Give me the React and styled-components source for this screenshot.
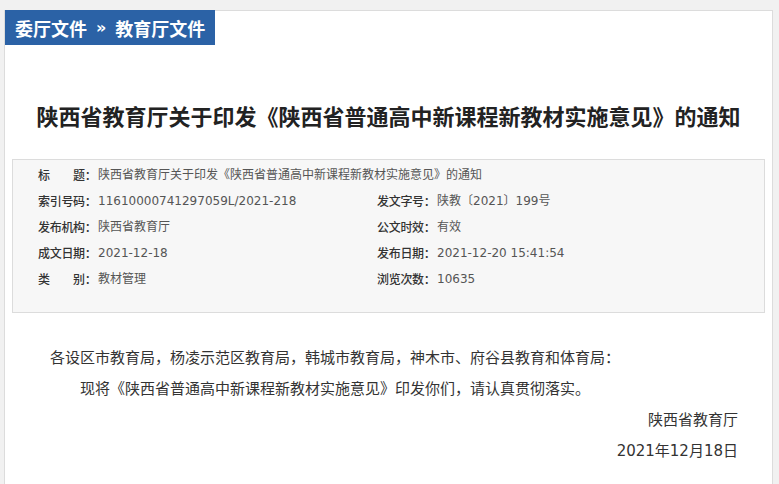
import React from 'react';
import styled, { createGlobalStyle } from 'styled-components';

const GlobalStyle = createGlobalStyle`
  body {
    margin: 0;
    background: #f1f1f1;
    font-family: "Noto Sans CJK SC", "Noto Sans", sans-serif;
    color: #333;
  }
`;

const info = [
  [['标　　题', '陕西省教育厅关于印发《陕西省普通高中新课程新教材实施意见》的通知', true]],
  [['索引号码', '11610000741297059L/2021-218'], ['发文字号', '陕教〔2021〕199号']],
  [['发布机构', '陕西省教育厅'], ['公文时效', '有效']],
  [['成文日期', '2021-12-18'], ['发布日期', '2021-12-20 15:41:54']],
  [['类　　别', '教材管理'], ['浏览次数', '10635']],
];

function App() {
  return (
    <>
      <GlobalStyle />
      <Page>
        <Panel>
          <Tab>
            委厅文件<Sep>»</Sep>教育厅文件
          </Tab>
          <Title>陕西省教育厅关于印发《陕西省普通高中新课程新教材实施意见》的通知</Title>

          <InfoBox>
            {info.map((row, i) =>
              row.map(([label, value, wide]) => (
                <InfoItem key={i + label} $wide={wide}>
                  <Label>{label}：</Label>
                  <Value>{value}</Value>
                </InfoItem>
              ))
            )}
          </InfoBox>

          <Article>
            <Para>各设区市教育局，杨凌示范区教育局，韩城市教育局，神木市、府谷县教育和体育局：</Para>
            <Para $indent>现将《陕西省普通高中新课程新教材实施意见》印发你们，请认真贯彻落实。</Para>
            <Sign>陕西省教育厅</Sign>
            <Sign>2021年12月18日</Sign>
          </Article>
        </Panel>
      </Page>
    </>
  );
}

export default App;

const Page = styled.div`
  padding: 10px 6px 0 4px;
  height: 484px;
  box-sizing: border-box;
  overflow: hidden;
`;

const Panel = styled.div`
  background: #fff;
  border: 1px solid #dcdcdc;
  border-bottom: none;
  height: 100%;
  box-sizing: border-box;
`;

const Tab = styled.div`
  display: inline-flex;
  align-items: center;
  margin-top: -1px;
  padding: 0 10px 0 10px;
  height: 35px;
  background: #2b62a6;
  color: #fff;
  font-size: 18px;
  font-weight: bold;
`;

const Sep = styled.span`
  margin: 0 9px 0 9px;
  font-family: "DejaVu Sans", sans-serif;
  font-size: 16px;
`;

const Title = styled.h1`
  margin: 0;
  padding: 54px 0 0;
  height: 114px;
  box-sizing: border-box;
  text-align: center;
  font-size: 22px;
  line-height: 32px;
  font-weight: bold;
  color: #222;
`;

const InfoBox = styled.div`
  margin: 0 7px;
  padding: 2px 0 20px 25px;
  background: #f7f7f7;
  border: 1px solid #dcdcdc;
  display: grid;
  grid-template-columns: 339px 1fr;
`;

const InfoItem = styled.div`
  grid-column: ${(p) => (p.$wide ? '1 / -1' : 'auto')};
  display: flex;
  height: 26px;
  line-height: 26px;
  white-space: nowrap;
`;

const Label = styled.span`
  width: 60px;
  font-size: 12px;
  color: #333;
  font-weight: 500;
  letter-spacing: -0.3px;
`;

const Value = styled.span`
  font-family: "DejaVu Sans", "Noto Sans CJK SC", sans-serif;
  font-size: 12px;
  color: #555;
`;

const Article = styled.div`
  padding: 30px 34px 0 45px;
  font-family: "DejaVu Sans", "Noto Sans CJK SC", sans-serif;
  font-size: 15px;
  color: #333;
`;

const Para = styled.p`
  margin: 0;
  height: 31px;
  line-height: 31px;
  padding-left: ${(p) => (p.$indent ? '30px' : '0')};
`;

const Sign = styled.p`
  margin: 0;
  height: 31px;
  line-height: 31px;
  text-align: right;
`;
